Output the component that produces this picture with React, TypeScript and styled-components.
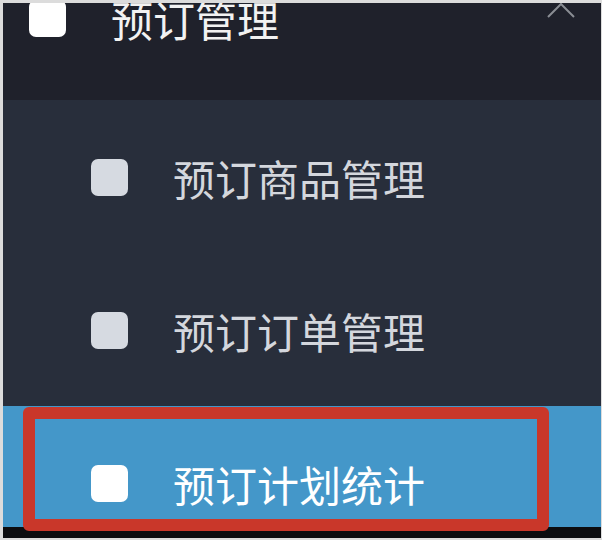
import styled, { createGlobalStyle } from 'styled-components';

const GlobalStyle = createGlobalStyle`
  html, body {
    margin: 0;
    padding: 0;
    background: #dcdcdc;
  }
  * {
    box-sizing: border-box;
  }
`;

const Frame = styled.div`
  position: relative;
  width: 602px;
  height: 540px;
  display: flex;
  flex-direction: column;
  overflow: hidden;
  border-style: solid;
  border-color: #dcdcdc;
  border-width: 3px 1px 2px 3px;
  font-family: 'Noto Sans CJK SC', 'Noto Sans', sans-serif;
`;

const Header = styled.div`
  height: 97px;
  flex-shrink: 0;
  display: flex;
  align-items: flex-start;
  padding: 0 25px 0 26px;
  background: #1f212b;
  overflow: hidden;
`;

const HeaderTitle = styled.div`
  display: flex;
  align-items: center;
  gap: 45px;
  margin-top: -3px;
`;

const Square = styled.span<{ $color: string }>`
  width: 37px;
  height: 37px;
  flex-shrink: 0;
  border-radius: 7px;
  background: ${(p) => p.$color};
`;

const Label = styled.span<{ $color: string }>`
  font-size: 42px;
  line-height: 37px;
  color: ${(p) => p.$color};
  white-space: nowrap;
`;

const Chevron = styled.svg`
  margin-left: auto;
  margin-top: -1px;
`;

const Menu = styled.ul`
  flex: 1;
  margin: 0;
  padding: 0;
  list-style: none;
  background: #282e3b;
  overflow: hidden;
`;

const Item = styled.li<{ $active?: boolean }>`
  height: 153px;
  display: flex;
  align-items: flex-start;
  gap: 45px;
  padding: 59px 0 0 88px;
  background: ${(p) => (p.$active ? '#4497c9' : 'transparent')};
`;

const Footer = styled.div`
  height: 11px;
  flex-shrink: 0;
  background: #0c0d10;
`;

const Highlight = styled.div`
  position: absolute;
  left: 20px;
  top: 404px;
  width: 526px;
  height: 124px;
  border: 12px solid #c9372a;
  border-radius: 6px;
  pointer-events: none;
`;

const items = [
  { label: '预订商品管理', active: false },
  { label: '预订订单管理', active: false },
  { label: '预订计划统计', active: true },
];

export default function App() {
  return (
    <>
      <GlobalStyle />
      <Frame>
        <Header>
          <HeaderTitle>
            <Square $color="#ffffff" />
            <Label $color="#f2f2f2">预订管理</Label>
          </HeaderTitle>
          <Chevron width="30" height="17" viewBox="0 0 30 17">
            <polyline points="2,15 15,2 28,15" fill="none" stroke="#8a8d94" strokeWidth="2" />
          </Chevron>
        </Header>
        <Menu>
          {items.map((item) => (
            <Item key={item.label} $active={item.active}>
              <Square $color={item.active ? '#ffffff' : '#d6dae1'} />
              <Label $color={item.active ? '#ffffff' : '#d4d7dd'}>{item.label}</Label>
            </Item>
          ))}
        </Menu>
        <Footer />
        <Highlight />
      </Frame>
    </>
  );
}
